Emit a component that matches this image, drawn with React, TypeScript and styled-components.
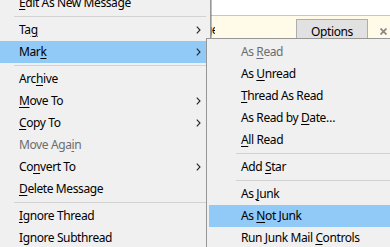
import * as React from 'react';
import styled, { createGlobalStyle } from 'styled-components';

const GlobalStyle = createGlobalStyle`
	html, body {
		margin: 0;
		padding: 0;
		background: #ffffff;
		overflow: hidden;
	}
	body {
		font-family: 'Noto Sans', 'Open Sans', sans-serif;
		font-size: 12px;
		letter-spacing: -0.4px;
		color: #000000;
	}
`;

const Screen = styled.div`
	position: relative;
	width: 390px;
	height: 247px;
	overflow: hidden;
	background: #ffffff;
	display: flex;
	flex-direction: column;
`;
const TopStrip = styled.div`
	height: 15px;
	flex-shrink: 0;
	background: #ffffff;
	border-bottom: 1px solid #c6c6c6;
`;
const NoticeBar = styled.div`
	flex: 1;
	background: #fffbe8;
	display: flex;
	align-items: flex-start;
	padding-top: 3px;
`;
const NoticeText = styled.span`
	width: 215px;
	flex-shrink: 0;
	text-align: right;
	white-space: nowrap;
	overflow: hidden;
	line-height: 22px;
`;
const OptionsButton = styled.button`
	margin-left: auto;
	width: 72px;
	height: 26px;
	padding: 0;
	background: #e1e1e1;
	border: 1px solid #adadad;
	font: inherit;
	letter-spacing: inherit;
	color: #000000;
	line-height: 22px;
	text-align: center;
	align-self: flex-start;
	& u {
		text-decoration-thickness: 1px;
		text-underline-offset: 2px;
	}
`;
const CloseIcon = styled.svg`
	margin: 9px 3px 0 12px;
	flex-shrink: 0;
`;

const Menu = styled.div<{ $left: number; $top: number; $width: number }>`
	position: absolute;
	left: ${(p) => p.$left}px;
	top: ${(p) => p.$top}px;
	width: ${(p) => p.$width}px;
	bottom: -20px;
	box-sizing: border-box;
	background: #f0f0f0;
	border: 1px solid #979797;
	padding: 2px;
	display: flex;
	flex-direction: column;
	box-shadow: 1px 1px 0 rgba(0, 0, 0, 0.25);
`;
const Item = styled.div<{ $active?: boolean; $disabled?: boolean }>`
	height: 22px;
	flex-shrink: 0;
	display: flex;
	align-items: center;
	padding: 0 7px 0 32px;
	background: ${(p) => (p.$active ? '#91c9f7' : 'transparent')};
	color: ${(p) => (p.$disabled ? '#6d6d6d' : '#000000')};
	white-space: nowrap;
	& u {
		text-decoration-thickness: 1px;
		text-underline-offset: 2px;
	}
`;
const Label = styled.span`
	flex: 1;
	line-height: 22px;
`;
const Separator = styled.div`
	height: 5px;
	flex-shrink: 0;
	box-sizing: border-box;
	padding-top: 2px;
	margin: 0 2px 0 27px;
	&::before {
		content: '';
		display: block;
		height: 1px;
		background: #d2d2d2;
	}
`;

const Arrow = () => (
	<svg width='5' height='8' viewBox='0 0 5 8'>
		<path d='M0.8 0.7 L4 4 L0.8 7.3' fill='none' stroke='#222' strokeWidth='1.1' />
	</svg>
);

type Entry =
	| { sep: true }
	| { pre: string; key?: string; post?: string; sub?: boolean; active?: boolean; disabled?: boolean };

const mainItems: Entry[] = [
	{ pre: '', key: 'E', post: 'dit As New Message' },
	{ sep: true },
	{ pre: 'Ta', key: 'g', post: '', sub: true },
	{ pre: 'Mar', key: 'k', post: '', sub: true, active: true },
	{ sep: true },
	{ pre: 'Arc', key: 'h', post: 'ive' },
	{ pre: '', key: 'M', post: 'ove To', sub: true },
	{ pre: '', key: 'C', post: 'opy To', sub: true },
	{ pre: 'Move Aga', key: 'i', post: 'n', disabled: true },
	{ pre: 'Co', key: 'n', post: 'vert To', sub: true },
	{ pre: '', key: 'D', post: 'elete Message' },
	{ sep: true },
	{ pre: '', key: 'I', post: 'gnore Thread' },
	{ pre: 'Ignore Subthread' },
];

const markItems: Entry[] = [
	{ pre: 'As ', key: 'R', post: 'ead', disabled: true },
	{ pre: 'As ', key: 'U', post: 'nread' },
	{ pre: '', key: 'T', post: 'hread As Read' },
	{ pre: 'As Read by ', key: 'D', post: 'ate…' },
	{ pre: '', key: 'A', post: 'll Read' },
	{ sep: true },
	{ pre: 'Add ', key: 'S', post: 'tar' },
	{ sep: true },
	{ pre: 'As ', key: 'J', post: 'unk' },
	{ pre: 'As ', key: 'N', post: 'ot Junk', active: true },
	{ pre: 'Run Junk Mail ', key: 'C', post: 'ontrols' },
];

const renderEntries = (entries: Entry[]) =>
	entries.map((e, i) =>
		'sep' in e ? (
			<Separator key={i} />
		) : (
			<Item key={i} $active={e.active} $disabled={e.disabled}>
				<Label>
					{e.pre}
					{e.key && <u>{e.key}</u>}
					{e.post}
				</Label>
				{e.sub && <Arrow />}
			</Item>
		)
	);

export default function App() {
	return (
		<>
			<GlobalStyle />
			<Screen>
				<TopStrip />
				<NoticeBar>
					<NoticeText>Thunderbird thinks this is a junk message.</NoticeText>
					<OptionsButton>
						<u>O</u>ptions
					</OptionsButton>
					<CloseIcon width='7' height='7' viewBox='0 0 7 7'>
						<path d='M0.5 0.5 L6.5 6.5 M6.5 0.5 L0.5 6.5' stroke='#8a8a8a' strokeWidth='1.8' />
					</CloseIcon>
				</NoticeBar>
				<Menu $left={-16} $top={-11} $width={227}>
					{renderEntries(mainItems)}
				</Menu>
				<Menu $left={206} $top={38} $width={190}>
					{renderEntries(markItems)}
				</Menu>
			</Screen>
		</>
	);
}
